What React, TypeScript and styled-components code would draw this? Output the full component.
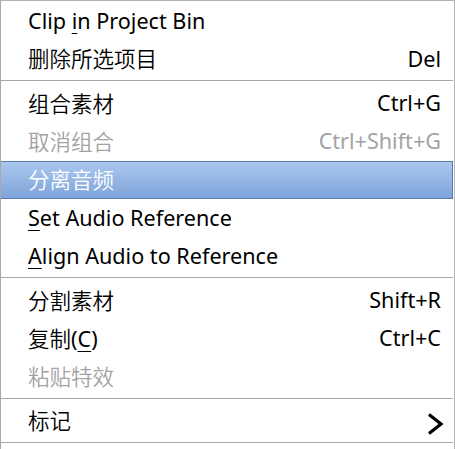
import React from "react";
import styled, { createGlobalStyle } from "styled-components";

const Global = createGlobalStyle`
  html, body { margin: 0; padding: 0; background: #ffffff; }
  body { font-family: "Noto Sans", "Noto Sans CJK SC", sans-serif; }
`;

const Menu = styled.div`
  box-sizing: border-box;
  width: 455px;
  height: 449px;
  overflow: hidden;
  background: #ffffff;
  border-top: 1px solid #b4b4b4;
  border-left: 1px solid #a8a8a8;
  border-right: 1px solid #b4b4b4;
  padding: 1px 1px 0 0;
  display: flex;
  flex-direction: column;
  font-family: "Noto Sans", "Noto Sans CJK SC", sans-serif;
  font-size: 21.6px;
`;

const Item = styled.div<{ $disabled?: boolean; $active?: boolean }>`
  box-sizing: border-box;
  height: 38.2px;
  flex: 0 0 38.2px;
  display: flex;
  align-items: center;
  justify-content: space-between;
  padding: 0 11px 0 27px;
  white-space: nowrap;
  color: ${(p) => (p.$active ? "#ffffff" : p.$disabled ? "#a3a3a3" : "#000000")};
  background: ${(p) =>
    p.$active ? "linear-gradient(to bottom, #a9c6ee 0%, #95b6e5 50%, #7ea3d9 100%)" : "transparent"};
  border: 1px solid ${(p) => (p.$active ? "#5a78a8" : "transparent")};
  border-left-width: ${(p) => (p.$active ? "1px" : "0")};
  margin-left: ${(p) => (p.$active ? "-1px" : "0")};
`;

const Label = styled.span`
  line-height: 1;
  margin-top: -1px;
`;

const Cjk = styled.span`
  font-family: "Noto Sans CJK SC", sans-serif;
  font-weight: 350;
  font-size: 21.5px;
`;

const Shortcut = styled.span`
  line-height: 1;
  margin-top: -1px;
`;

const Mnemonic = styled.span`
  text-decoration: underline;
  text-decoration-thickness: 1px;
  text-underline-offset: 4px;
`;

const Separator = styled.div`
  flex: 0 0 1px;
  height: 1px;
  margin: 2px 0 3px 0;
  background: #a6a6a6;
`;

const Chevron = styled.svg`
  width: 18px;
  height: 24px;
  margin-right: -3px;
  margin-top: 6px;
`;

export default function App() {
  return (
    <>
      <Global />
      <Menu>
        <Item>
          <Label>
            Clip <Mnemonic>i</Mnemonic>n Project Bin
          </Label>
        </Item>
        <Item>
          <Label><Cjk>删除所选项目</Cjk></Label>
          <Shortcut>Del</Shortcut>
        </Item>
        <Separator />
        <Item>
          <Label><Cjk>组合素材</Cjk></Label>
          <Shortcut>Ctrl+G</Shortcut>
        </Item>
        <Item $disabled>
          <Label><Cjk>取消组合</Cjk></Label>
          <Shortcut>Ctrl+Shift+G</Shortcut>
        </Item>
        <Item $active>
          <Label><Cjk>分离音频</Cjk></Label>
        </Item>
        <Item>
          <Label>
            <Mnemonic>S</Mnemonic>et Audio Reference
          </Label>
        </Item>
        <Item>
          <Label>
            <Mnemonic>A</Mnemonic>lign Audio to Reference
          </Label>
        </Item>
        <Separator />
        <Item>
          <Label><Cjk>分割素材</Cjk></Label>
          <Shortcut>Shift+R</Shortcut>
        </Item>
        <Item>
          <Label>
            <Cjk>复制</Cjk>(<Mnemonic>C</Mnemonic>)
          </Label>
          <Shortcut>Ctrl+C</Shortcut>
        </Item>
        <Item $disabled>
          <Label><Cjk>粘贴特效</Cjk></Label>
        </Item>
        <Separator />
        <Item>
          <Label><Cjk>标记</Cjk></Label>
          <Chevron viewBox="0 0 18 24">
            <polyline
              points="3,2.5 15,12 3,21.5"
              fill="none"
              stroke="#000"
              strokeWidth="3.2"
              strokeLinejoin="miter"
            />
          </Chevron>
        </Item>
        <Separator />
      </Menu>
    </>
  );
}
